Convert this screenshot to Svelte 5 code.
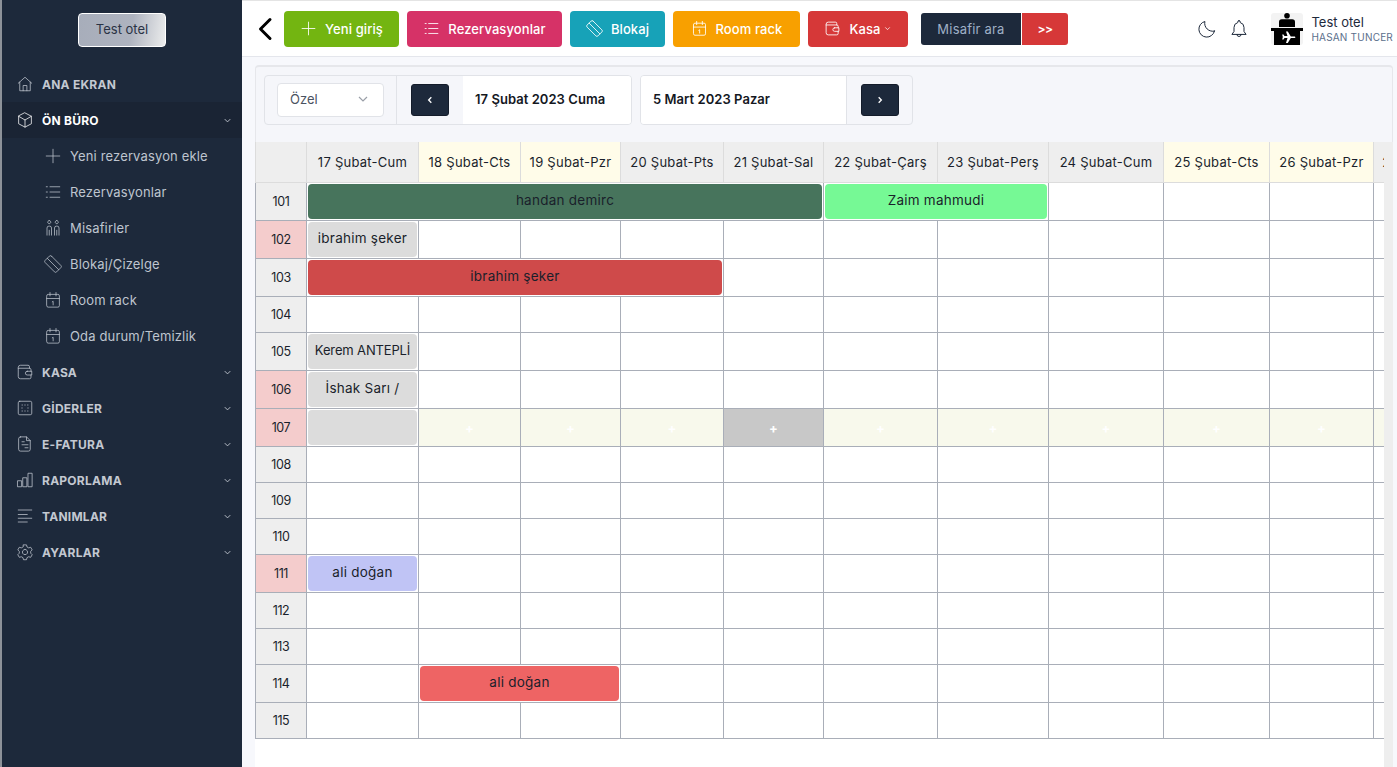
<script>
    const icons = {
        home: 'M3 11 12 3l9 8M5 9.5V21h14V9.5M9.5 21v-7h5v7',
        box: 'M12 2.5 20.5 7v10L12 21.5 3.5 17V7zM3.5 7 12 12l8.5-5M12 12v9.5',
        plus: 'M12 3v18M3 12h18',
        list: 'M8 5h13M8 12h13M8 19h13M3 5h1.5M3 12h1.5M3 19h1.5',
        guests: 'M7 2a2.1 2.1 0 1 0 .01 0M17 2a2.1 2.1 0 1 0 .01 0M4 21.5V12a2.5 2.5 0 0 1 2.5-2.5h1A2.5 2.5 0 0 1 10 12v9.5M7 15v6.5M14 21.5V12a2.5 2.5 0 0 1 2.5-2.5h1A2.5 2.5 0 0 1 20 12v9.5M17 15v6.5',
        block: 'M10 1.5 22.500 14a2 2 0 0 1 0 2.800L16.800 22.500a2 2 0 0 1-2.800 0L1.500 10a2 2 0 0 1 0-2.800L7.200 1.500a2 2 0 0 1 2.800 0zM4.500 4.500l15 15',
        calendar: 'M3.5 6.5a2 2 0 0 1 2-2h13a2 2 0 0 1 2 2v13a2 2 0 0 1-2 2h-13a2 2 0 0 1-2-2zM3.5 10h17M8 2v4.5M16 2v4.5M11 14.5l1.2-.8v4.8',
        wallet: 'M18 7V5a2 2 0 0 0-2-2H6a3 3 0 0 0-3 3v12a3 3 0 0 0 3 3h12a2 2 0 0 0 2-2v-3M3 7h15a2 2 0 0 1 2 2v2M15 11h6v5h-6a2.5 2.5 0 0 1 0-5z',
        expense: 'M5 3h14a2 2 0 0 1 2 2v14a2 2 0 0 1-2 2H5a2 2 0 0 1-2-2V5a2 2 0 0 1 2-2zM8 8h.6M11.7 8h.6M15.4 8h.6M8 16h.6M11.7 16h.6M15.4 16h.6M8 11.7v.6M16 11.7v.6',
        invoice: 'M6 2.5h8l5 5V19a2.5 2.5 0 0 1-2.5 2.5H6A2.5 2.5 0 0 1 3.5 19V5A2.5 2.5 0 0 1 6 2.5zM14 2.5V7.5h5M8 9h3M8 13h8M12 17h4',
        chart: 'M2.5 13h5v8h-5zM9.5 9h5v12h-5zM16.5 3h5v18h-5z',
        lines: 'M3 4h18M3 10h12M3 15h18M3 20h12',
        gear: 'M12 8.5a3.5 3.5 0 1 0 .01 0M10 2.5h4l.7 2.8 2.2 1.2 2.7-.8 2 3.500-2 2v2.400l2 2-2 3.500-2.700-.8-2.200 1.200-.7 2.800h-4l-.7-2.800-2.200-1.200-2.700.8-2-3.500 2-2v-2.400l-2-2 2-3.500 2.700.8 2.200-1.200z',
        moon: 'M21 14.5A9.5 9.5 0 0 1 9.5 3a9.500 9.500 0 1 0 11.500 11.500z',
        bell: 'M12 2a1.500 1.500 0 0 1 1.500 1.500v.8A6 6 0 0 1 18 10.200V15l2.500 3.500h-17L6 15v-4.800a6 6 0 0 1 4.500-5.900v-.8A1.500 1.500 0 0 1 12 2zM9.500 18.500a2.500 2.500 0 0 0 5 0',
        down: 'M6 9l6 6 6-6'
    };

    const subItems = [
        ['plus', 'Yeni rezervasyon ekle'],
        ['list', 'Rezervasyonlar'],
        ['guests', 'Misafirler'],
        ['block', 'Blokaj/Çizelge'],
        ['calendar', 'Room rack'],
        ['calendar', 'Oda durum/Temizlik']
    ];

    const lowerItems = [
        ['wallet', 'KASA'],
        ['expense', 'GİDERLER'],
        ['invoice', 'E-FATURA'],
        ['chart', 'RAPORLAMA'],
        ['lines', 'TANIMLAR'],
        ['gear', 'AYARLAR']
    ];

    const actions = [
        { icon: 'plus', label: 'Yeni giriş', cls: 'green' },
        { icon: 'list', label: 'Rezervasyonlar', cls: 'pink' },
        { icon: 'block', label: 'Blokaj', cls: 'teal' },
        { icon: 'calendar', label: 'Room rack', cls: 'orange' },
        { icon: 'wallet', label: 'Kasa', cls: 'red', caret: true }
    ];

    const days = [
        ['17 Şubat-Cum', 112, false],
        ['18 Şubat-Cts', 102, true],
        ['19 Şubat-Pzr', 100, true],
        ['20 Şubat-Pts', 103, false],
        ['21 Şubat-Sal', 100, false],
        ['22 Şubat-Çarş', 114, false],
        ['23 Şubat-Perş', 111, false],
        ['24 Şubat-Cum', 115, false],
        ['25 Şubat-Cts', 106, true],
        ['26 Şubat-Pzr', 104, true],
        ['27 Şubat-Pts', 100, false]
    ];

    // start = column index, span = number of days
    const rooms = [
        { no: 101, h: 38, bookings: [{ start: 0, span: 5, name: 'handan demirc', cls: 'b-green' }, { start: 5, span: 2, name: 'Zaim mahmudi', cls: 'b-mint' }] },
        { no: 102, h: 38, dirty: true, bookings: [{ start: 0, span: 1, name: 'ibrahim şeker', cls: 'b-grey' }] },
        { no: 103, h: 38, bookings: [{ start: 0, span: 4, name: 'ibrahim şeker', cls: 'b-red' }] },
        { no: 104, h: 36 },
        { no: 105, h: 38, bookings: [{ start: 0, span: 1, name: 'Kerem ANTEPLİ', cls: 'b-grey tight' }] },
        { no: 106, h: 38, dirty: true, bookings: [{ start: 0, span: 1, name: 'İshak Sarı /', cls: 'b-grey' }] },
        { no: 107, h: 38, dirty: true, hover: true, bookings: [{ start: 0, span: 1, name: '', cls: 'b-grey' }] },
        { no: 108, h: 36 },
        { no: 109, h: 36 },
        { no: 110, h: 36 },
        { no: 111, h: 38, dirty: true, bookings: [{ start: 0, span: 1, name: 'ali doğan', cls: 'b-lilac' }] },
        { no: 112, h: 36 },
        { no: 113, h: 36 },
        { no: 114, h: 38, bookings: [{ start: 1, span: 2, name: 'ali doğan', cls: 'b-coral' }] },
        { no: 115, h: 36 }
    ];

    // turn a room's bookings into the row's cells
    function cellsFor(room) {
        const cells = [];
        let col = 0;
        const list = room.bookings || [];
        while (col < days.length) {
            const b = list.find((x) => x.start === col);
            if (b) {
                cells.push({ booking: b, span: b.span, col });
                col += b.span;
            } else {
                cells.push({ span: 1, col });
                col += 1;
            }
        }
        return cells;
    }
</script>

{#snippet icon(name, size)}
    <svg class="icon" width={size} height={size} viewBox="0 0 24 24"><path d={icons[name]} /></svg>
{/snippet}

<div class="app">
    <aside class="sidebar">
        <div class="hotel-wrap"><button class="hotel">Test otel</button></div>
        <nav>
            <div class="item top">{@render icon('home', 18)}<span>ANA EKRAN</span></div>
            <div class="item open">{@render icon('box', 18)}<span>ÖN BÜRO</span><svg class="caret" width="11" height="11" viewBox="0 0 24 24"><path d={icons.down} /></svg></div>
            {#each subItems as [ic, label]}
                <div class="item sub">{@render icon(ic, 18)}<span>{label}</span></div>
            {/each}
            {#each lowerItems as [ic, label]}
                <div class="item">{@render icon(ic, 18)}<span>{label}</span><svg class="caret" width="11" height="11" viewBox="0 0 24 24"><path d={icons.down} /></svg></div>
            {/each}
        </nav>
    </aside>

    <div class="main">
        <header>
            <svg class="back" width="16" height="24" viewBox="0 0 16 24"><path d="M13 2.5 3.500 12l9.500 9.500" /></svg>
            <div class="actions">
                {#each actions as a}
                    <button class="action {a.cls}">
                        {@render icon(a.icon, 17)}
                        <span>{a.label}</span>
                        {#if a.caret}<svg class="mini-caret" width="9" height="9" viewBox="0 0 24 24"><path d={icons.down} /></svg>{/if}
                    </button>
                {/each}
            </div>
            <div class="search">
                <button class="search-input">Misafir ara</button>
                <button class="search-go">&gt;&gt;</button>
            </div>
            <div class="right">
                {@render icon('moon', 20)}
                {@render icon('bell', 20)}
                <div class="user">
                    <svg class="avatar" width="32" height="32" viewBox="0 0 32 32">
                        <rect width="32" height="32" rx="3" fill="#f3f3f3" />
                        <circle cx="16" cy="2.8" r="2.8" fill="#000" />
                        <path d="M8 14V9q0-2.800 2.800-2.800h10.400Q24 6.200 24 9v5z" fill="#000" />
                        <rect y="15" width="32" height="3" fill="#000" />
                        <rect x="3" y="18" width="26" height="14" fill="#000" />
                        <path d="M15 18.500h1.800l3 5h4q1.500.5 0 1.500h-4l-3 5H15l1.500-5h-3l-1 1.500h-1.300l.6-2.500-.6-2.500h1.300l1 1.500h3z" fill="#fff" />
                    </svg>
                    <div class="user-text">
                        <div class="user-hotel">Test otel</div>
                        <div class="user-name">HASAN TUNCER</div>
                    </div>
                </div>
            </div>
        </header>

        <section class="panel">
            <div class="filters">
                <div class="group">
                    <div class="range-cell">
                        <div class="select"><span>Özel</span><svg width="16" height="16" viewBox="0 0 24 24"><path d={icons.down} /></svg></div>
                    </div>
                    <div class="nav-cell">
                        <button class="nav-btn"><svg width="8" height="8" viewBox="0 0 24 24"><path d="M16 4 8 12l8 8" /></svg></button>
                    </div>
                    <div class="date first">17 Şubat 2023 Cuma</div>
                </div>
                <div class="group">
                    <div class="date second">5 Mart 2023 Pazar</div>
                    <div class="nav-cell next">
                        <button class="nav-btn"><svg width="8" height="8" viewBox="0 0 24 24"><path d="M8 4l8 8-8 8" /></svg></button>
                    </div>
                </div>
            </div>
        </section>

        <div class="grid-row">
            <div class="grid-wrap">
                <table>
                    <colgroup>
                        <col style="width: 51px" />
                        {#each days as d}
                            <col style="width: {d[1]}px" />
                        {/each}
                    </colgroup>
                    <thead>
                        <tr>
                            <th></th>
                            {#each days as d}
                                <th class:weekend={d[2]}>{d[0]}</th>
                            {/each}
                        </tr>
                    </thead>
                    <tbody>
                        {#each rooms as room}
                            <tr style="height: {room.h}px">
                                <td class="room" class:dirty={room.dirty}>{room.no}</td>
                                {#each cellsFor(room) as cell}
                                    {#if cell.booking}
                                        <td colspan={cell.span} class="slot">
                                            <div class="booking {cell.booking.cls}">{cell.booking.name}</div>
                                        </td>
                                    {:else if room.hover}
                                        <td class="empty" class:active={cell.col === 4}>+</td>
                                    {:else}
                                        <td></td>
                                    {/if}
                                {/each}
                            </tr>
                        {/each}
                    </tbody>
                </table>
            </div>
            <div class="track"></div>
        </div>
    </div>
</div>

<style>
    :global(body) {
        margin: 0;
        background: #fff;
        font-family: 'Inter', 'Liberation Sans', sans-serif;
        overflow: hidden;
    }

    .app {
        display: flex;
        height: 767px;
        overflow: hidden;
        border-left: 2px solid #8d9299;
        box-sizing: border-box;
    }

    .icon {
        flex: none;
        fill: none;
        stroke: currentColor;
        stroke-width: 1.2;
        stroke-linecap: round;
        stroke-linejoin: round;
    }

    /* sidebar */
    .sidebar {
        flex: none;
        width: 240px;
        background: #1d293b;
        box-sizing: border-box;
    }

    .hotel-wrap {
        display: flex;
        justify-content: center;
        padding: 13px 0 19px;
    }

    .hotel {
        width: 88px;
        height: 34px;
        padding: 0 0 2px;
        border: 1px solid #fff;
        border-radius: 4px;
        background: linear-gradient(100deg, #a7adba 0%, #aeb3bf 60%, #eceded 100%);
        color: #2a3345;
        font: 400 13px 'Inter', sans-serif;
    }

    .item {
        display: flex;
        align-items: center;
        height: 36px;
        padding: 0 9px 0 14px;
        color: #c3c8d1;
        font-size: 12px;
        font-weight: 700;
        letter-spacing: 0.25px;
    }

    .item span {
        margin-left: 8px;
    }

    .item .icon {
        stroke-width: 1;
    }

    .item.open {
        background: #1a2434;
        color: #fff;
    }

    .item.sub {
        padding-left: 42px;
        font-size: 13px;
        font-weight: 400;
        letter-spacing: 0.15px;
        color: #bfc5cf;
    }

    .caret {
        margin-left: auto;
        fill: none;
        stroke: #c3c8d1;
        stroke-width: 2;
    }

    /* header */
    .main {
        flex: 1;
        min-width: 0;
        background: #f7f8fc;
    }

    header {
        display: flex;
        align-items: center;
        height: 57px;
        box-sizing: border-box;
        background: #fff;
        border-top: 1px solid #e4e4e4;
        border-bottom: 1px solid #e4e6ec;
        padding-left: 15px;
    }

    .back {
        flex: none;
        fill: none;
        stroke: #000;
        stroke-width: 3;
        stroke-linecap: round;
        stroke-linejoin: round;
    }

    .actions {
        display: flex;
        gap: 8px;
        margin-left: 11px;
    }

    .action {
        display: flex;
        align-items: center;
        justify-content: center;
        gap: 8px;
        height: 36px;
        padding: 0;
        border: none;
        border-radius: 4px;
        color: #fff;
        font: 500 13px 'Inter', sans-serif;
        letter-spacing: 0.1px;
    }

    .action.green { width: 115px; background: #73b511; }
    .action.pink { width: 155px; background: #d63267; }
    .action.teal { width: 95px; background: #17a2b8; }
    .action.orange { width: 127px; background: #f8a000; }
    .action.red { width: 100px; background: #d63838; }

    .mini-caret {
        margin-left: -6px;
        fill: none;
        stroke: #fff;
        stroke-width: 2;
    }

    .search {
        display: flex;
        gap: 1px;
        margin-left: 13px;
    }

    .search button {
        height: 32px;
        padding: 0;
        border: none;
        font: 400 13px 'Inter', sans-serif;
        letter-spacing: 0.2px;
    }

    .search .search-input {
        width: 100px;
        border-radius: 3px 0 0 3px;
        background: #1d293b;
        color: #9fb0c6;
    }

    .search .search-go {
        width: 46px;
        border-radius: 0 3px 3px 0;
        background: #d63838;
        color: #fff;
        font-size: 12px;
        font-weight: 600;
        letter-spacing: -0.5px;
    }

    .right {
        display: flex;
        align-items: center;
        margin-left: auto;
        gap: 12px;
        color: #1d293b;
    }

    .user {
        display: flex;
        align-items: center;
        gap: 8px;
        margin-left: 10px;
        margin-right: 4px;
    }

    .avatar {
        flex: none;
    }

    .user-hotel {
        font-size: 13px;
        color: #1d293b;
        line-height: 18px;
    }

    .user-name {
        font-size: 10px;
        color: #5b6f8c;
        line-height: 13px;
        letter-spacing: 0.2px;
        white-space: nowrap;
    }

    /* filter panel */
    .panel {
        margin: 8px 4px 0 13px;
        height: 77px;
        box-sizing: border-box;
        padding: 8px 8px;
        background: #f5f6fa;
        border: 1px solid #e6e7eb;
        border-top-width: 2px;
        border-bottom: none;
        border-radius: 4px 4px 0 0;
    }

    .filters {
        display: flex;
        gap: 8px;
    }

    .group {
        display: flex;
        height: 50px;
        box-sizing: border-box;
        border: 1px solid #e1e3e8;
        border-radius: 4px;
        overflow: hidden;
    }

    .range-cell {
        display: flex;
        align-items: center;
        width: 132px;
        box-sizing: border-box;
        padding-left: 12px;
        border-right: 1px solid #e1e3e8;
    }

    .select {
        display: flex;
        align-items: center;
        justify-content: space-between;
        width: 107px;
        height: 34px;
        box-sizing: border-box;
        padding: 0 12px 2px;
        background: #fff;
        border: 1px solid #e1e3e8;
        border-radius: 4px;
        color: #4a5261;
        font-size: 13px;
    }

    .select svg {
        fill: none;
        stroke: #9a9fa8;
        stroke-width: 1.8;
    }

    .nav-cell {
        display: flex;
        align-items: center;
        justify-content: center;
        width: 66px;
        box-sizing: border-box;
    }

    .nav-cell.next {
        border-left: 1px solid #e1e3e8;
    }

    .nav-btn {
        display: flex;
        align-items: center;
        justify-content: center;
        width: 38px;
        height: 32px;
        padding: 0;
        border: 1px solid #141c2a;
        border-radius: 3px;
        background: #1d293b;
    }

    .nav-btn svg {
        fill: none;
        stroke: #fff;
        stroke-width: 4;
    }

    .date {
        display: flex;
        align-items: center;
        background: #fff;
        color: #14181f;
        font-size: 13px;
        font-weight: 600;
        letter-spacing: 0.05px;
        padding-bottom: 2px;
    }

    .date.first {
        width: 168px;
        padding-left: 12px;
        box-sizing: border-box;
    }

    .date.second {
        width: 205px;
        padding-left: 12px;
        box-sizing: border-box;
    }

    /* room grid */
    .grid-row {
        display: flex;
        margin: 0 4px 0 13px;
        height: 625px;
    }

    .grid-wrap {
        flex: none;
        width: 1129px;
        background: #fff;
        overflow: hidden;
    }

    .track {
        flex: 1;
        background: #eeeeee;
    }

    table {
        table-layout: fixed;
        width: 1218px;
        border-collapse: collapse;
        font-size: 13px;
        color: #1a1f2b;
    }

    th {
        height: 40px;
        padding: 0;
        background: #eeeeee;
        border: 1px solid #dcdcdc;
        border-top: none;
        font-weight: 400;
        letter-spacing: 0.25px;
        white-space: nowrap;
        overflow: hidden;
    }

    th.weekend {
        background: #fffce9;
    }

    td {
        padding: 0;
        border: 1px solid #a9aeb8;
        text-align: center;
        background: #fff;
    }

    td.room {
        background: #eeeeee;
        font-size: 12.5px;
        letter-spacing: -0.4px;
    }

    td.room.dirty {
        background: #f4cccc;
    }

    td.slot {
        padding: 1px;
    }

    td.empty {
        background: #f8f9ec;
        color: #fff;
        font-weight: 700;
    }

    td.empty.active {
        background: #c8c8c8;
    }

    .booking {
        display: flex;
        align-items: center;
        justify-content: center;
        height: 35px;
        box-sizing: border-box;
        padding-bottom: 3px;
        border-radius: 4px;
        font-size: 13.5px;
        letter-spacing: 0.25px;
        white-space: nowrap;
        overflow: hidden;
    }

    .booking.tight {
        font-size: 13px;
        letter-spacing: -0.15px;
    }

    .b-green { background: #47745c; }
    .b-mint { background: #76f995; }
    .b-grey { background: #dcdcdc; }
    .b-red { background: #cf4a4a; }
    .b-lilac { background: #c0c4f5; }
    .b-coral { background: #ee6464; }
</style>
